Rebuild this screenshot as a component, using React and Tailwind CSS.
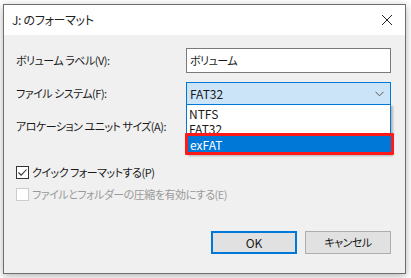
import React from "react";

const font = "font-['Noto_Sans_CJK_JP','Noto_Sans',sans-serif] [font-feature-settings:'palt']";

function Check({ checked, disabled }) {
  return (
    <div
      className={`w-[13px] h-[13px] border flex items-center justify-center bg-white shrink-0 ${
        disabled ? "border-[#cccccc]" : "border-[#333333]"
      }`}
    >
      {checked && (
        <svg width="11" height="11" viewBox="0 0 11 11">
          <path d="M1.5 5.5 L4.2 8.2 L9.5 2.5" fill="none" stroke="#333" strokeWidth="1.1" />
        </svg>
      )}
    </div>
  );
}

export default function App() {
  return (
    <div className={`w-[411px] h-[278px] bg-white pt-[4px] pl-[3px] ${font} text-[11px] tracking-[-0.5px] leading-none text-[#1a1a1a]`}>
      <div className="w-[403px] h-[270px] border border-[#6e6e6e] flex flex-col shadow-[0_2px_8px_rgba(0,0,0,0.3)] bg-[#f0f0f0]">
        <div className="h-[30px] bg-white flex items-center justify-between pl-[8px] pr-[12px]">
          <span className="text-[12px] tracking-[-0.3px] text-[#222]">J: のフォーマット</span>
          <svg width="12" height="12" viewBox="0 0 12 12">
            <path d="M1 1 L11 11 M11 1 L1 11" stroke="#222" strokeWidth="1" />
          </svg>
        </div>
        <div className="flex-1 flex flex-col pl-[12px] pr-[14px]">
          <div className="mt-[13px] h-[25px] flex items-center">
            <div className="w-[170px]">ボリューム ラベル(V):</div>
            <div className="w-[205px] h-[25px] border border-[#7a7a7a] bg-white flex items-center pl-[3px]">
              ボリューム
            </div>
          </div>
          <div className="mt-[9px] h-[23px] flex items-center">
            <div className="w-[170px]">ファイル システム(F):</div>
            <div className="relative w-[205px] h-[23px] text-[12px] tracking-normal">
              <div className="w-full h-full border border-[#0078d7] bg-[#cce4f7] flex items-center justify-between pl-[3px] pr-[6px]">
                <span>FAT32</span>
                <svg width="9" height="6" viewBox="0 0 9 6">
                  <path d="M0.5 0.8 L4.5 4.8 L8.5 0.8" fill="none" stroke="#555" strokeWidth="1" />
                </svg>
              </div>
              <div className="absolute left-0 top-[22px] w-[205px] h-[50px] bg-white border border-[#0078d7] shadow-[2px_2px_2px_rgba(0,0,0,0.25)] z-10 flex flex-col">
                <div className="h-[15px] pl-[2px] flex items-center mt-[1px]">NTFS</div>
                <div className="h-[15px] pl-[2px] flex items-center">FAT32</div>
                <div className="h-[17px] pl-[3px] flex items-center bg-[#0078d7] text-white">exFAT</div>
              </div>
              <div className="absolute left-[-1px] top-[51px] w-[209px] h-[22px] border-[3px] border-[#ff1a1a] rounded-[1px] z-20" />
            </div>
          </div>
          <div className="mt-[11px] h-[20px] flex items-center">
            <div>アロケーション ユニット サイズ(A):</div>
          </div>
          <div className="mt-[30px] h-[13px] flex items-center gap-[3px]">
            <Check checked />
            <span>クイック フォーマットする(P)</span>
          </div>
          <div className="mt-[9px] h-[13px] flex items-center gap-[3px]">
            <Check disabled />
            <span className="text-[#9a9a9a]">ファイルとフォルダーの圧縮を有効にする(E)</span>
          </div>
          <div className="mt-[30px] flex justify-end gap-[8px]">
            <div className="w-[86px] h-[23px] border-2 border-[#0078d7] bg-[#e1e1e1] flex items-center justify-center text-[12px] tracking-normal">
              OK
            </div>
            <div className="w-[86px] h-[23px] border border-[#adadad] bg-[#e1e1e1] flex items-center justify-center">
              キャンセル
            </div>
          </div>
        </div>
      </div>
    </div>
  );
}
